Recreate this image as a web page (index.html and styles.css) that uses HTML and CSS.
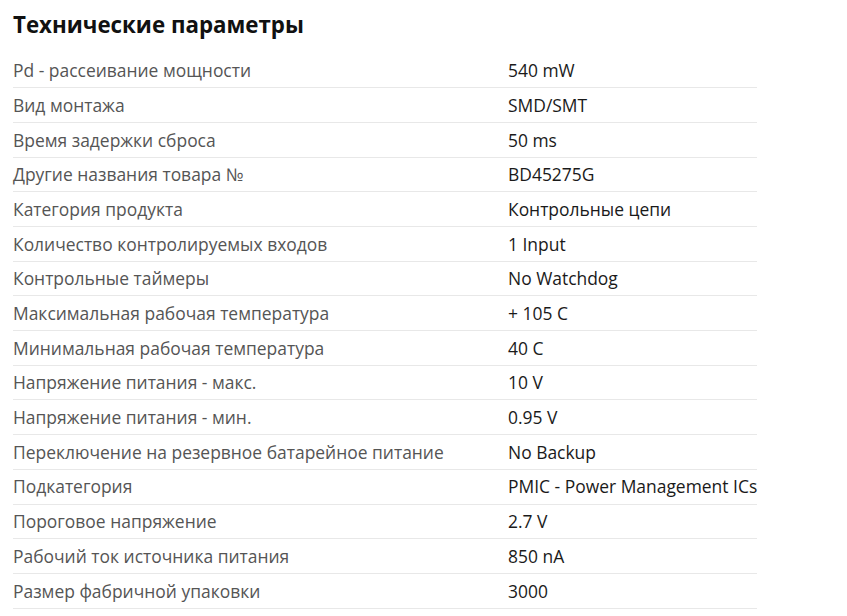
FILE: index.html
```html
<!DOCTYPE html>
<html lang="ru">
<head>
<meta charset="utf-8">
<link rel="stylesheet" href="styles.css">
</head>
<body>
<section class="specs">
  <h2 class="specs-title">Технические параметры</h2>
  <div class="specs-list">
    <div class="row"><span class="label">Pd - рассеивание мощности</span><span class="value">540 mW</span></div>
    <div class="row"><span class="label">Вид монтажа</span><span class="value">SMD/SMT</span></div>
    <div class="row"><span class="label">Время задержки сброса</span><span class="value">50 ms</span></div>
    <div class="row"><span class="label">Другие названия товара №</span><span class="value">BD45275G</span></div>
    <div class="row"><span class="label">Категория продукта</span><span class="value">Контрольные цепи</span></div>
    <div class="row"><span class="label">Количество контролируемых входов</span><span class="value">1 Input</span></div>
    <div class="row"><span class="label">Контрольные таймеры</span><span class="value">No Watchdog</span></div>
    <div class="row"><span class="label">Максимальная рабочая температура</span><span class="value">+ 105 C</span></div>
    <div class="row"><span class="label">Минимальная рабочая температура</span><span class="value">40 C</span></div>
    <div class="row"><span class="label">Напряжение питания - макс.</span><span class="value">10 V</span></div>
    <div class="row"><span class="label">Напряжение питания - мин.</span><span class="value">0.95 V</span></div>
    <div class="row"><span class="label">Переключение на резервное батарейное питание</span><span class="value">No Backup</span></div>
    <div class="row"><span class="label">Подкатегория</span><span class="value">PMIC - Power Management ICs</span></div>
    <div class="row"><span class="label">Пороговое напряжение</span><span class="value">2.7 V</span></div>
    <div class="row"><span class="label">Рабочий ток источника питания</span><span class="value">850 nA</span></div>
    <div class="row"><span class="label">Размер фабричной упаковки</span><span class="value">3000</span></div>
  </div>
</section>
</body>
</html>
```
FILE: styles.css
```css
html, body {
  margin: 0;
  padding: 0;
  background: #ffffff;
}
body {
  font-family: "Open Sans", "Noto Sans", sans-serif;
}
.specs {
  width: 744px;
  padding: 10.3px 0 0 13px;
}
.specs-title {
  margin: 0 0 13.3px 0;
  font-size: 22.3px;
  font-weight: 700;
  line-height: 30px;
  color: #111111;
}
.specs-list {
  display: flex;
  flex-direction: column;
}
.row {
  display: grid;
  grid-template-columns: 495px 1fr;
  padding: 5.6px 0 4.4px 0;
  line-height: 23.71px;
  font-size: 17.45px;
  border-bottom: 1px solid #e8e8e8;
  white-space: nowrap;
}
.label {
  color: #555555;
}
.value {
  color: #1a1a1a;
}
```
